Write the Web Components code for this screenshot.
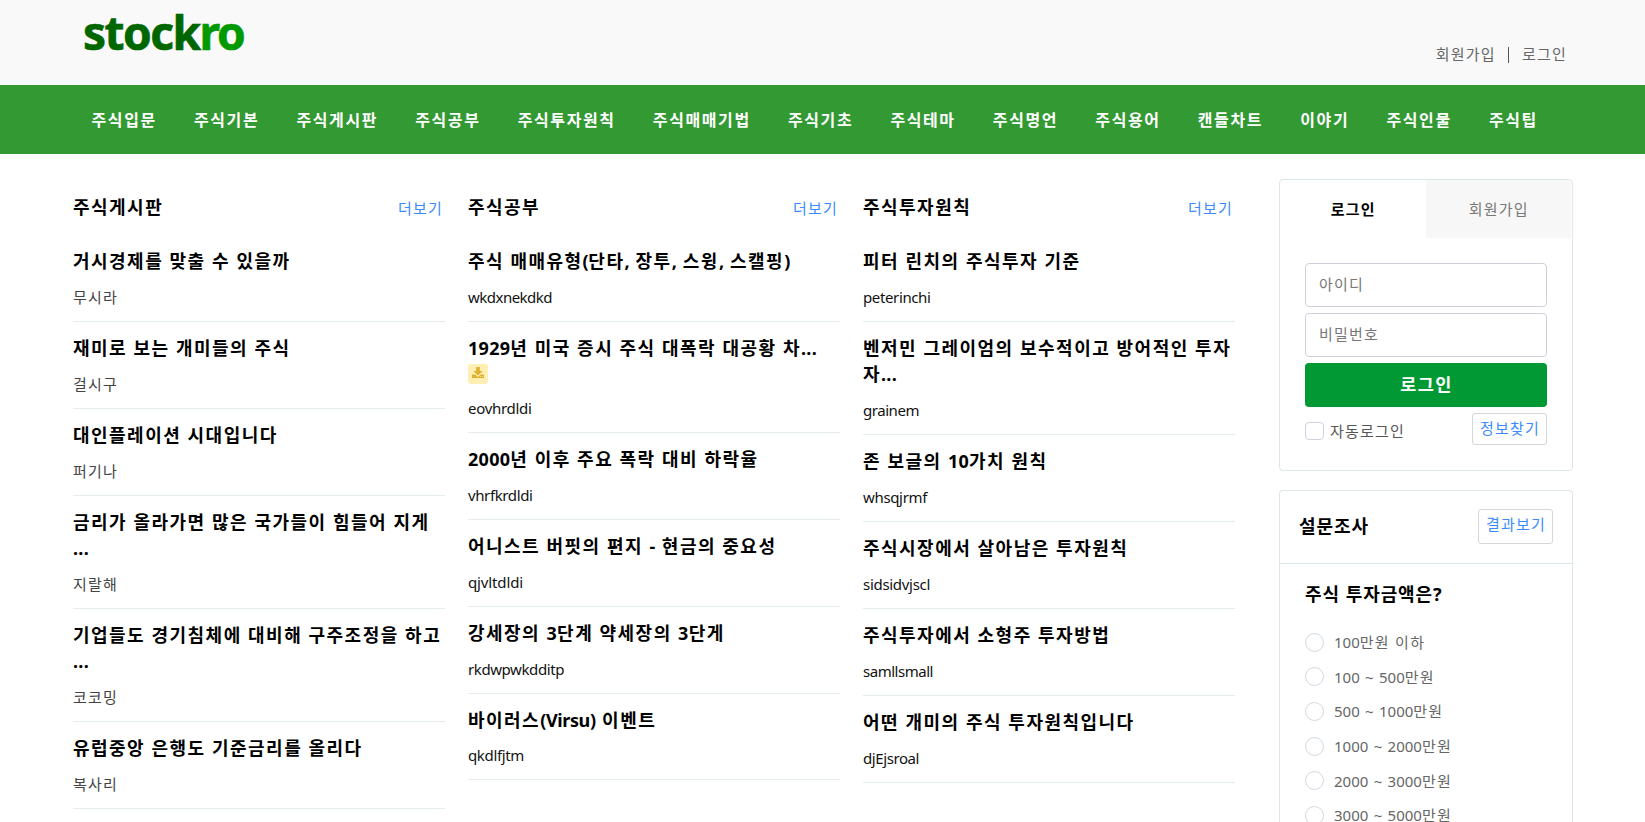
<!DOCTYPE html>
<html lang="ko">
<head>
<meta charset="utf-8">
<title>stockro</title>
<style>
html,body{margin:0;padding:0;background:#fff}
body{height:822px;overflow:hidden;font-family:"Noto Sans","Noto Sans CJK KR",sans-serif;color:#000}
</style>
</head>
<body>
<stock-app></stock-app>
<script>
function define(name, css, html, setup) {
  customElements.define(name, class extends HTMLElement {
    connectedCallback() {
      if (this.shadowRoot) return;
      const root = this.attachShadow({mode: 'open'});
      root.innerHTML = '<style>*{box-sizing:border-box}' + css + '</style>' + (typeof html === 'function' ? html(this) : html);
      if (setup) setup(this, root);
    }
  });
}

define('k-text', ':host{display:inline-block;white-space:nowrap}span{display:inline;white-space:pre}.h{letter-spacing:var(--h,.082em);word-spacing:.012em}.l{letter-spacing:var(--l,0)}.p{letter-spacing:-.02em}', el => {
  const runs = el.getAttribute('t').split('|').map(line =>
    (line.match(/[\uac00-\ud7a3 ]+|[^\uac00-\ud7a3 ]+/g) || []).map(r =>
      '<span class="' + (/[\uac00-\ud7a3 ]/.test(r) ? 'h' : /[(),]/.test(r) ? 'p' : 'l') + '">' + r + '</span>').join(''));
  return runs.join('<br>');
}, (el, root) => {
  const w = +el.getAttribute('w');
  if (!w) return;
  const s = root.querySelector('span');
  s.style.letterSpacing = '0';
  s.style.letterSpacing = (w - s.getBoundingClientRect().width) / s.textContent.length + 'px';
});

define('site-logo', `:host{display:flex;height:64px;padding-left:1px;font:bold 46px/64px "Noto Sans",sans-serif;-webkit-text-stroke:.7px}
.a{color:#060}.b{color:#090}`,
  '<span class="a"><k-text t="stock" w="116.500"></k-text></span><span class="b"><k-text t="ro" w="44"></k-text></span>');

define('site-header', `:host{display:flex;justify-content:space-between;height:85px;background:#f9f9f9;padding:0 78px 0 82px}
.u{display:flex;align-items:center;margin-top:43px;height:22px;font-size:15px;line-height:22px;color:#666}
i{width:1px;height:16px;background:#555;margin:2px 13px 0 12px}`,
  '<site-logo></site-logo><div class="u"><k-text t="회원가입"></k-text><i></i><k-text t="로그인"></k-text></div>');

define('site-nav', `:host{display:flex;gap:37.2px;align-items:center;height:69px;background:#393;color:#fff;font-weight:700;font-size:16px;line-height:24px;padding:0 0 0 91.500px;--h:.1em}`,
  ['주식입문','주식기본','주식게시판','주식공부','주식투자원칙','주식매매기법','주식기초','주식테마','주식명언','주식용어','캔들차트','이야기','주식인물','주식팁']
    .map(t => `<k-text t="${t}"></k-text>`).join(''));

define('file-badge', ':host{display:block;width:20px;height:20px;border-radius:3px;background:#ffefb3}svg{display:block}',
  '<svg width="20" height="20" viewBox="0 0 20 20"><path fill="#e0b030" d="M8.200 3h3.600v4h2.900L10 11.600 5.300 7h2.900z"/><path fill="#e0b030" d="M4 10.500h3.200L10 13l2.800-2.500H16V14H4z"/><path fill="#ffefb3" d="M12 12.200h1v.9h-1zM14 12.200h1v.9h-1z"/></svg>');

define('post-item', `:host{display:flex;flex-direction:column;justify-content:space-between;border-bottom:1px solid #e5ecee;padding:13px 0 12px}
.t{font-weight:700;font-size:18px;line-height:26px;--l:.015em}
.u{font-size:15px;line-height:24px;color:#111}.ko{color:#444}file-badge{margin-top:3px}`,
  el => {
    const u = el.getAttribute('user'), w = el.getAttribute('uw');
    return `<div class="t"><k-text t="${el.getAttribute('title-text')}"></k-text>${el.hasAttribute('file') ? '<file-badge></file-badge>' : ''}</div>
<div class="u ${w ? '' : 'ko'}"><k-text t="${u}" ${w ? `w="${w}"` : ''}></k-text></div>`;
  });

define('post-board', `:host{display:block;width:372px}
header{display:flex;justify-content:space-between;align-items:center;height:56px;padding-right:2px}
.h{font-weight:700;font-size:18px;line-height:26px}.m{font-size:15px;line-height:22px;color:#3b8bff;margin-top:2px}`,
  el => `<header><k-text class="h" t="${el.getAttribute('name')}"></k-text><k-text class="m" t="더보기"></k-text></header><slot></slot>`);

define('login-card', `:host{display:block;height:292px;border:1px solid #dde6e8;border-radius:4px}
.tabs{display:flex;height:58px}.tabs div{flex:1;display:flex;align-items:center;justify-content:center;font-size:15px;line-height:22px;padding:0 0 1px 1px}
.tabs .on{font-weight:700}.tabs .off{background:#f7f7f7;color:#777;margin-right:1px}
.form{padding:25px 25px 0;display:flex;flex-direction:column;gap:6px}
.in{height:44px;border:1px solid #d0d0dc;border-radius:4px;padding:0 13px 2px;display:flex;align-items:center;font-size:15px;color:#777;line-height:22px}
.go{height:44px;border-radius:4px;background:#093;color:#fff;font-weight:700;font-size:17.500px;display:flex;align-items:center;justify-content:center;line-height:26px;padding:0 0 2px 1px}
.row{display:flex;justify-content:space-between}.auto{display:flex;align-items:center;height:18px;margin-top:9px;gap:6px;font-size:15px;color:#555;line-height:22px}
.cb{width:19px;height:18px;border:1px solid #d0d0e0;border-radius:4px}
.find{width:75px;height:32px;border:1px solid #d3d6da;border-radius:3px;display:flex;justify-content:center;font-size:15px;line-height:22px;padding:3px 0 0 1px;color:#3b8bff}`,
  `<div class="tabs"><div class="on"><k-text t="로그인"></k-text></div><div class="off"><k-text t="회원가입"></k-text></div></div>
<div class="form"><div class="in"><k-text t="아이디"></k-text></div><div class="in"><k-text t="비밀번호"></k-text></div><div class="go"><k-text t="로그인"></k-text></div>
<div class="row"><div class="auto"><span class="cb"></span><k-text t="자동로그인"></k-text></div><div class="find"><k-text t="정보찾기"></k-text></div></div></div>`);

define('poll-option', `:host{display:flex;align-items:center;gap:10px;height:34.6px;font-size:15px;line-height:22px;color:#666}
i{width:19px;height:19px;border:1px solid #d0d9e2;border-radius:50%}`,
  el => `<i></i><k-text t="${el.getAttribute('label')}"></k-text>`);

define('poll-card', `:host{display:block;height:332px;border:1px solid #dde6e8;border-bottom:0;border-radius:4px 4px 0 0}
header{display:flex;justify-content:space-between;align-items:center;height:73px;border-bottom:1px solid #dde6e8;padding:0 19px 0 19px}
.h{font-weight:700;font-size:18px;line-height:26px;--h:.05em}header .h{margin-bottom:2px}
.b{width:75px;height:35px;border:1px solid #d3d6da;border-radius:3px;display:flex;justify-content:center;font-size:15px;line-height:22px;padding:3px 0 0 1px;color:#3b8bff;margin-bottom:2px}
.body{padding:17px 25px 0}.opts{margin-top:18px}.q{display:block;--h:.05em}`,
  `<header><k-text class="h" t="설문조사"></k-text><div class="b"><k-text t="결과보기"></k-text></div></header>
<div class="body"><k-text class="h q" t="주식 투자금액은?"></k-text><div class="opts">${['100만원 이하','100 ~ 500만원','500 ~ 1000만원','1000 ~ 2000만원','2000 ~ 3000만원','3000 ~ 5000만원'].map(t => `<poll-option label="${t}"></poll-option>`).join('')}</div></div>`);

const boards = [
  ['주식게시판', [['거시경제를 맞출 수 있을까','무시라',87],['재미로 보는 개미들의 주식','걸시구',87],['대인플레이션 시대입니다','퍼기나',87],
    ['금리가 올라가면 많은 국가들이 힘들어 지게|...','지랄해',113],['기업들도 경기침체에 대비해 구주조정을 하고|...','코코밍',113],['유럽중앙 은행도 기준금리를 올리다','복사리',87]]],
  ['주식공부', [['주식 매매유형(단타, 장투, 스윙, 스캘핑)','wkdxnekdkd',87,84],['1929년 미국 증시 주식 대폭락 대공황 차...','eovhrdldi',111,63.5,1],['2000년 이후 주요 폭락 대비 하락율','vhrfkrdldi',87,64.5],
    ['어니스트 버핏의 편지 - 현금의 중요성','qjvltdldi',87,55],['강세장의 3단계 약세장의 3단게','rkdwpwkdditp',87,96],['바이러스(Virsu) 이벤트','qkdlfjtm',86,56]]],
  ['주식투자원칙', [['피터 린치의 주식투자 기준','peterinchi',87,67.5],['벤저민 그레이엄의 보수적이고 방어적인 투자|자...','grainem',113,56],['존 보글의 10가치 원칙','whsqjrmf',87,64],
    ['주식시장에서 살아남은 투자원칙','sidsidvjscl',87,67],['주식투자에서 소형주 투자방법','samllsmall',87,70],['어떤 개미의 주식 투자원칙입니다','djEjsroal',87,56]]]
];

define('stock-app', `:host{display:block;height:822px;overflow:hidden}
main{display:flex;padding:25px 0 0 73px}.boards{display:flex;gap:23px}aside{width:294px;margin-left:44px;display:flex;flex-direction:column;gap:19px}`,
  `<site-header></site-header><site-nav></site-nav><main><div class="boards">${boards.map(([n, items]) =>
    `<post-board name="${n}">${items.map(([t, u, h, w, f]) => `<post-item style="height:${h}px;box-sizing:border-box" title-text="${t}" user="${u}" ${w ? `uw="${w}"` : ''} ${f ? 'file' : ''}></post-item>`).join('')}</post-board>`).join('')}</div>
<aside><login-card style="box-sizing:border-box"></login-card><poll-card style="box-sizing:border-box"></poll-card></aside></main>`);
</script>
</body>
</html>
